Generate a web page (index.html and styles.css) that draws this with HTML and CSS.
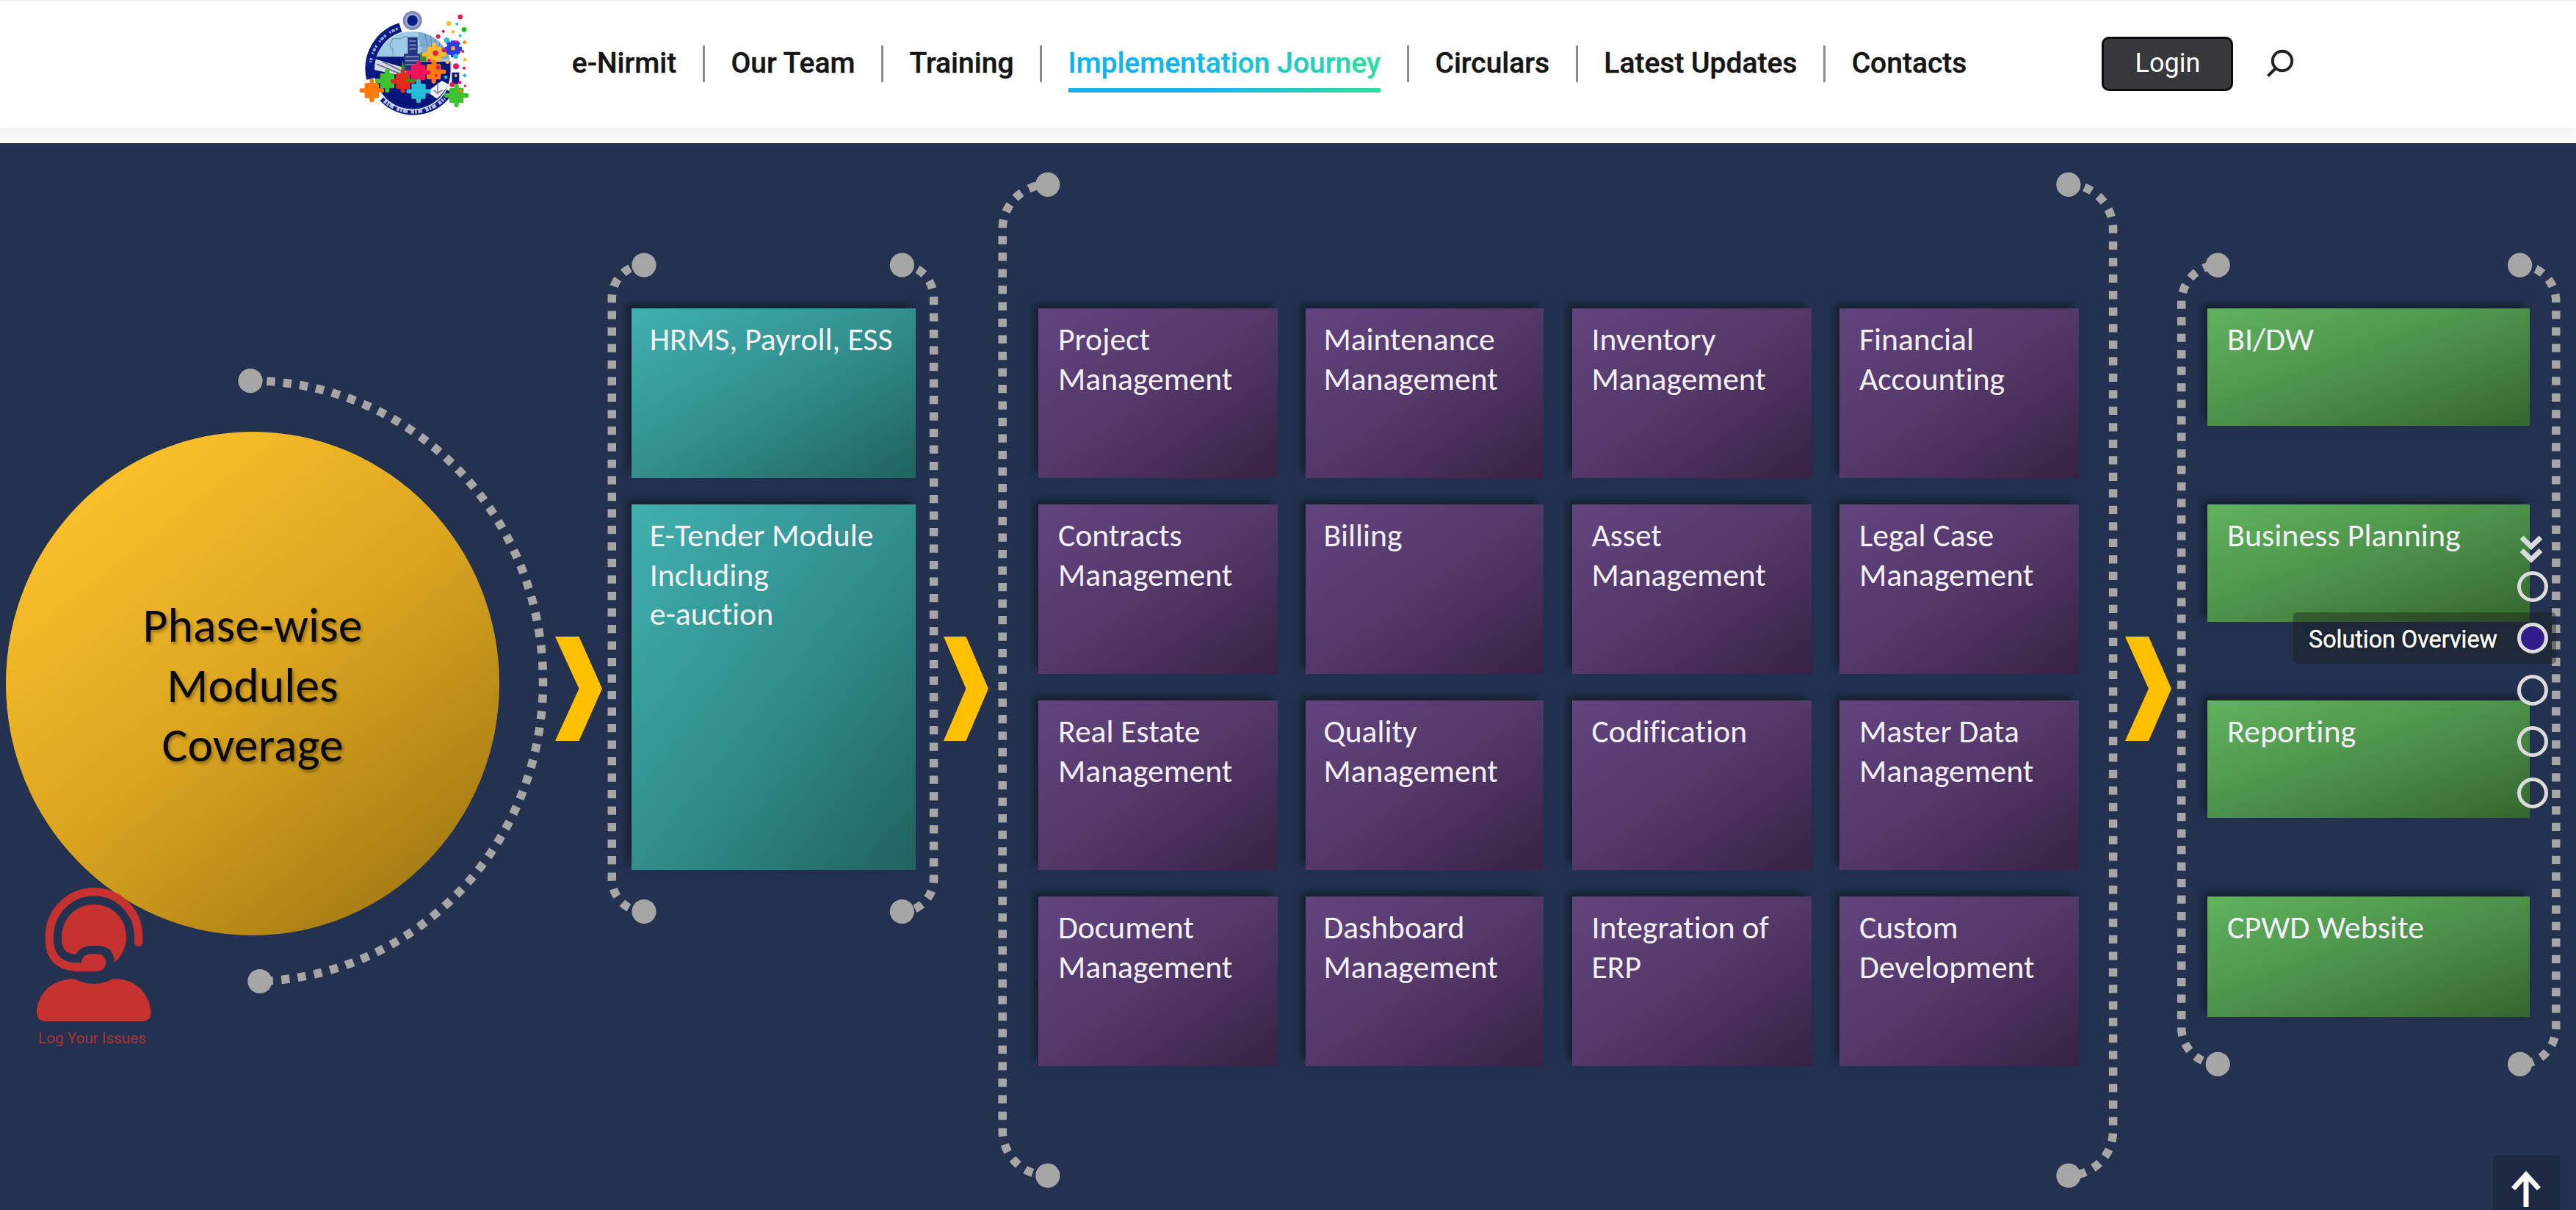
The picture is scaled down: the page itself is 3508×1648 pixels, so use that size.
FILE: index.html
```
<!DOCTYPE html>
<html lang="en">
<head>
<meta charset="utf-8">
<title>e-Nirmit | Implementation Journey</title>
<link rel="stylesheet" href="styles.css">
</head>
<body>
<header class="header">
  <a class="logo" href="#" aria-label="e-Nirmit home">
    <svg width="200" height="174" viewBox="0 0 600 522">
      <defs>
        <clipPath id="disc"><circle cx="276" cy="286" r="158"/></clipPath>
        <g id="piece">
          <rect x="-29" y="-31" width="58" height="62" rx="5"/>
          <rect x="-9" y="-48" width="18" height="96" rx="7"/>
          <rect x="-50" y="-9" width="100" height="18" rx="7"/>
        </g>
      </defs>
      <circle cx="276" cy="286" r="158" fill="#9ccbe6"/>
      <g clip-path="url(#disc)">
        <path d="M300 90h140v150H330Q290 160 300 90z" fill="#7fadcf"/>
        <path d="M320 100l20 110M345 100l10 110M370 105v110M395 115l-15 100M415 140l-30 80" stroke="#5e86ad" stroke-width="3"/>
        <path d="M195 230v-30q-22-8 0-42h34q18-18 28 0M300 190q30-20 40 8" fill="none" stroke="#7a9bb4" stroke-width="4"/>
        <path d="M100 232h160v20h180v200H100z" fill="#08157c"/>
        <path d="M120 240l150 46-10 30-140-30z" fill="#d5d9e4"/>
        <path d="M130 262l120 50M150 250l110 55" stroke="#6d7486" stroke-width="6"/>
        <path d="M240 220h16v-68h40v68h12v70h-68z" fill="#26347f"/>
        <path d="M262 168h28M262 184h28M262 200h28M246 232h56M246 248h56M246 264h56" stroke="#7f95bd" stroke-width="5"/>
        <path d="M228 290l6-46 14 46zM308 214q20-10 24 36h-24z" fill="#3d8c12"/>
        <path d="M335 375l60-45 30 15-45 62z" fill="#eef0f6"/>
        <path d="M378 340v46M362 368q16 20 34 0" stroke="#7882a8" stroke-width="5" fill="none"/>
        <path d="M160 370q110 90 250 20v70H160z" fill="#071273"/>
      </g>
      <path d="M226 112A177 177 0 0 0 106 322" fill="none" stroke="#071b83" stroke-width="38"/>
      <path d="M155 400A172 172 0 0 0 425 372" fill="none" stroke="#071b83" stroke-width="34"/>
      <path d="M215 117A170 170 0 0 0 104 255" fill="none" stroke="#9aa3cf" stroke-width="11" stroke-dasharray="9 4 14 5 6 18"/>
      <path d="M160 412A178 178 0 0 0 406 402" fill="none" stroke="#b4bbe0" stroke-width="15" stroke-dasharray="12 4 8 4 18 14"/>
      <path d="M146 382A158 158 0 0 0 433 290V250" fill="none" stroke="#dfe4f4" stroke-width="5"/>
      <path d="M436 296h30v46h-30z" fill="#071b83"/>
      <circle cx="275" cy="84" r="39" fill="#7f89b5"/>
      <circle cx="275" cy="84" r="27" fill="none" stroke="#aab2d2" stroke-width="5"/>
      <circle cx="275" cy="84" r="21" fill="#0a1a85"/>
      <g>
        <use href="#piece" x="364" y="222" fill="#f9b92c"/>
        <use href="#piece" x="362" y="293" fill="#ff7a08"/>
        <use href="#piece" x="172" y="330" fill="#3ec22f"/>
        <use href="#piece" x="236" y="332" fill="#e42a1c"/>
        <use href="#piece" x="299" y="296" fill="#ee1459"/>
        <use href="#piece" x="300" y="373" fill="#27bdd6"/>
        <use href="#piece" x="109" y="370" fill="#ff7a08"/>
        <use href="#piece" x="455" y="390" fill="#3ec22f"/>
      </g>
      <g fill="#2c3be6">
        <circle cx="441" cy="200" r="28"/>
        <path d="M432 166h18v68h-18zM407 191h70v18h-70zM412 178l12-12 48 48-12 12zM460 166l12 12-48 48-12-12z"/>
      </g>
      <path d="M250 324h40v11h-40z" fill="#3d8c12"/>
      <circle cx="441" cy="197" r="9" fill="#f5a623"/>
      <g fill="#ee1459"><circle cx="470" cy="69" r="10"/><circle cx="380" cy="149" r="9"/><circle cx="401" cy="128" r="6"/><circle cx="369" cy="217" r="11"/><circle cx="404" cy="205" r="9"/><circle cx="453" cy="271" r="12"/><circle cx="486" cy="278" r="6"/><circle cx="437" cy="346" r="10"/><circle cx="468" cy="337" r="7"/><circle cx="490" cy="351" r="5"/><circle cx="380" cy="276" r="9"/><circle cx="343" cy="247" r="7"/><circle cx="481" cy="210" r="6"/><circle cx="453" cy="171" r="6"/><circle cx="372" cy="308" r="6"/></g>
      <g fill="#f9b92c"><circle cx="423" cy="96" r="10"/><circle cx="441" cy="130" r="7"/><circle cx="489" cy="244" r="7"/><circle cx="418" cy="253" r="8"/><circle cx="452" cy="309" r="6"/></g>
      <g fill="#27bdd6"><circle cx="457" cy="98" r="6"/><circle cx="470" cy="146" r="6"/><circle cx="415" cy="164" r="11"/><circle cx="452" cy="230" r="10"/><circle cx="489" cy="308" r="7"/><circle cx="411" cy="316" r="7"/></g>
      <circle cx="486" cy="121" r="10" fill="#16b81c"/>
      <circle cx="488" cy="173" r="7" fill="#ff7a08"/><circle cx="470" cy="371" r="7" fill="#ff7a08"/>
    </svg>
  </a>
  <nav class="nav">
    <a class="nav-item" href="#">e-Nirmit</a>
    <a class="nav-item" href="#">Our Team</a>
    <a class="nav-item" href="#">Training</a>
    <a class="nav-item" href="#"><span class="current">Implementation Journey</span></a>
    <a class="nav-item" href="#">Circulars</a>
    <a class="nav-item" href="#">Latest Updates</a>
    <a class="nav-item" href="#">Contacts</a>
  </nav>
  <button class="login">Login</button>
  <svg class="search" width="42" height="42" viewBox="0 0 42 42"><circle cx="24" cy="17" r="13.2"/><path d="M15 27L4.500 37.500"/></svg>
</header>

<main class="stage">
  <svg class="frames" width="3508" height="1453" viewBox="0 195 3508 1453">
    <g class="dotted">
      <path d="M341 518.600A398.500 409 0 0 1 739.500 929A398.500 407.500 0 0 1 353.800 1336.500" stroke-dashoffset="-22.400"/>
      <path d="M877 361A43.700 45 0 0 0 833.300 406V1197A43.700 44.500 0 0 0 877 1241.500" stroke-dashoffset="2.900"/>
      <path d="M1228.400 361A43.200 45 0 0 1 1271.600 406V1197A43.200 44.500 0 0 1 1228.400 1241.500" stroke-dashoffset="0.400"/>
      <path d="M1426.800 251.300A61.600 61 0 0 0 1365.200 312.300V1540A61.600 61 0 0 0 1426.800 1601" stroke-dashoffset="7.100"/>
      <path d="M2816.900 251.300A60.700 61 0 0 1 2877.600 312.300V1540A60.700 61 0 0 1 2816.900 1601" stroke-dashoffset="0.600"/>
      <path d="M3020.200 361.200A49.500 50 0 0 0 2970.700 411.200V1399.300A49.500 50 0 0 0 3020.200 1449.300" stroke-dashoffset="13.600"/>
      <path d="M3431.600 361.200A49.200 50 0 0 1 3480.800 411.200V1399.300A49.200 50 0 0 1 3431.600 1449.300" stroke-dashoffset="0.200"/>
    </g>
    <g class="ends">
      <circle cx="341" cy="518.600" r="16.600"/><circle cx="353.800" cy="1336.500" r="16.600"/>
      <circle cx="877" cy="361" r="16.600"/><circle cx="1228.400" cy="361" r="16.600"/>
      <circle cx="877" cy="1241.500" r="16.600"/><circle cx="1228.400" cy="1241.500" r="16.600"/>
      <circle cx="1426.800" cy="251.300" r="16.600"/><circle cx="2816.900" cy="251.300" r="16.600"/>
      <circle cx="1426.800" cy="1601.200" r="16.600"/><circle cx="2816.900" cy="1601.200" r="16.600"/>
      <circle cx="3020.200" cy="361.200" r="16.600"/><circle cx="3431.600" cy="361.200" r="16.600"/>
      <circle cx="3020.200" cy="1449.300" r="16.600"/><circle cx="3431.600" cy="1449.300" r="16.600"/>
    </g>
  </svg>

  <div class="flow">
    <h1 class="coverage">Phase-wise<br>Modules<br>Coverage</h1>
    <svg class="arrow arrow-first" width="64" height="142" viewBox="0 0 64 142"><path d="M0 0H32.500L64 71L32.500 142H0L32.500 71z"/></svg>
    <section class="group teal">
      <div class="card">HRMS, Payroll, ESS</div>
      <div class="card">E-Tender Module<br>Including<br>e-auction</div>
    </section>
    <svg class="arrow arrow-second" width="61" height="142" viewBox="0 0 61 142"><path d="M0 0H30.500L61 71L30.500 142H0L30.500 71z"/></svg>
    <section class="group purple">
      <div class="card">Project<br>Management</div>
      <div class="card card-tight">Maintenance<br>Management</div>
      <div class="card">Inventory<br>Management</div>
      <div class="card">Financial<br>Accounting</div>
      <div class="card">Contracts<br>Management</div>
      <div class="card card-tight">Billing</div>
      <div class="card">Asset<br>Management</div>
      <div class="card">Legal Case<br>Management</div>
      <div class="card">Real Estate<br>Management</div>
      <div class="card card-tight">Quality<br>Management</div>
      <div class="card">Codification</div>
      <div class="card">Master Data<br>Management</div>
      <div class="card">Document<br>Management</div>
      <div class="card card-tight">Dashboard<br>Management</div>
      <div class="card">Integration of<br>ERP</div>
      <div class="card">Custom<br>Development</div>
    </section>
    <svg class="arrow arrow-third" width="63" height="142" viewBox="0 0 63 142"><path d="M0 0H32L63 71L32 142H0L32 71z"/></svg>
    <section class="group green">
      <div class="card">BI/DW</div>
      <div class="card">Business Planning</div>
      <div class="card">Reporting</div>
      <div class="card">CPWD Website</div>
    </section>
  </div>
</main>

<a class="support" href="#">
  <svg width="200" height="206" viewBox="0 0 600 618">
    <path class="band" d="M476 280V257A182 183 0 0 0 112 257V278Q118 372 213 381H300"/>
    <path d="M243 364A36 36 0 0 1 279 328H308A35 35 0 0 1 308 398H215V364z"/>
    <path d="M162 257A132 132 0 0 1 426 257Q426 318 378 363Q375 295 308 295H280Q242 295 221 327Q213 330 206 328Q162 322 162 268z"/>
    <path d="M60 570C60 500 115 430 213 430Q250 450 294 450Q336 450 370 430C470 424 526 500 526 570Q524 604 490 603H95Q62 602 60 570z"/>
  </svg>
  <span>Log Your Issues</span>
</a>

<aside class="section-nav">
  <svg width="40" height="44" viewBox="0 0 40 44"><path d="M6 7L19 19.500L32 7M6 24.500L19 37L32 24.500"/></svg>
  <i class="dot"></i>
  <i class="dot dot-active"></i>
  <i class="dot"></i>
  <i class="dot"></i>
  <i class="dot"></i>
  <span class="tooltip">Solution Overview</span>
</aside>

<a class="to-top" href="#" aria-label="Back to top">
  <svg width="91" height="74" viewBox="0 0 91 74"><path d="M45 70V27M27.500 45L45 26L62.500 45"/></svg>
</a>
</body>
</html>
```
FILE: styles.css
```
* { box-sizing: border-box; }

body {
  margin: 0;
  height: 1648px;
  overflow: hidden;
  position: relative;
  background: #fafafa;
  font-family: Roboto, sans-serif;
}

a { color: inherit; text-decoration: none; }

/* Header */
.header {
  display: flex;
  align-items: flex-start;
  height: 174px;
  padding-left: 470px;
  background: #fff;
  border-top: 1px solid #ededed;
  box-shadow: 0 6px 16px 4px rgba(0, 0, 0, .035);
}

.logo { display: block; width: 200px; height: 173px; }
.logo svg { display: block; margin-top: -1px; }

.nav {
  display: flex;
  margin: 61px 0 0 73.200px;
  font-size: 39px;
  font-weight: 500;
  line-height: 49px;
  color: #161616;
  -webkit-text-stroke: .4px currentColor;
}

.nav-item {
  display: block;
  height: 50px;
  padding: 0 35.600px;
  white-space: nowrap;
  border-right: 3px solid #8a8a8a;
}
.nav-item:last-child { border-right: 0; }

.current {
  position: relative;
  display: block;
  color: transparent;
  background: linear-gradient(90deg, #12b2f5 35%, #2ddf9b);
  -webkit-background-clip: text;
  background-clip: text;
}
.current::after {
  content: "";
  position: absolute;
  left: 0;
  right: 0;
  top: 57.500px;
  height: 6px;
  background: linear-gradient(90deg, #12b2f5 35%, #2ddf9b);
}

.login {
  width: 179px;
  height: 74px;
  margin: 49px 0 0 148.500px;
  padding: 0 0 2px;
  border: 3px solid #0c0c0d;
  border-radius: 10px;
  background: #37383c;
  color: #fff;
  font: 400 36px/1 Roboto, sans-serif;
}

.search { margin: 65px 0 0 43px; fill: none; stroke: #222; stroke-width: 4; }

/* Journey diagram */
.stage {
  position: relative;
  height: 1453px;
  margin-top: 21px;
  background: #243250;
}

.frames { position: absolute; left: 0; top: 0; }
.dotted path { fill: none; stroke: #a6a6a6; stroke-width: 11.500; stroke-dasharray: 11.250 11.250; }
.ends { fill: #a6a6a6; }

.flow {
  position: relative;
  display: flex;
  align-items: flex-start;
  padding: 225px 0 0 8px;
  font-family: Carlito, Calibri, "Open Sans", sans-serif;
  font-variant-ligatures: none;
}

.coverage {
  width: 672px;
  height: 686px;
  margin: 168px 0 0;
  padding-top: 223px;
  border-radius: 50%;
  background: linear-gradient(142deg, #ffc42c 8%, #dba520 50%, #a07812 92%);
  color: #0a0904;
  font-size: 65.700px;
  font-weight: 400;
  line-height: 81.500px;
  text-align: center;
  text-shadow: 2px 3px 4px rgba(0, 0, 0, .35);
}

.arrow { flex: none; margin-top: 446.500px; fill: #ffc000; }
.arrow-first { margin-left: 76.300px; }
.arrow-second { margin-left: 38px; }
.arrow-third { margin-left: 63px; }

.group { display: grid; flex: none; }

.card {
  padding: 16.200px 0 0 27px;
  color: #f3eff6;
  font-size: 44px;
  line-height: 53.400px;
  white-space: nowrap;
  box-shadow: -7px -7px 10px -1px rgba(10, 14, 20, .55);
}

.teal { width: 386.500px; margin-left: 40.200px; grid-template-rows: 231px 498px; row-gap: 36px; }
.teal .card { padding-left: 24.200px; font-size: 43.800px; background: linear-gradient(to bottom right, #40b1ae, #318f8d 50%, #20625e); }

.purple {
  margin-left: 68px;
  grid-template-columns: 326px 323.800px 326px 326px;
  grid-template-rows: repeat(4, 231px);
  gap: 36.100px 38.400px;
}
.purple .card { font-size: 43.600px; background: linear-gradient(to bottom right, #62447e, #533868 50%, #362344); }
.purple .card-tight { padding-left: 24px; }

.green { width: 439.500px; margin-left: 49px; grid-template-rows: 160px 160px 160px 164px; row-gap: 107px; }
.green .card { background: linear-gradient(to bottom right, #60b35d, #4c914a 50%, #346630); }

/* Support shortcut */
.support {
  position: absolute;
  left: 30px;
  top: 1190px;
  width: 200px;
  color: #c53230;
}
.support svg { display: block; fill: currentColor; }
.support .band { fill: none; stroke: currentColor; stroke-width: 34; stroke-linecap: round; }
.support span {
  display: block;
  padding-left: 22px;
  font-size: 20.700px;
  line-height: 36px;
  color: #ad3239;
}

/* Section navigation */
.section-nav {
  position: absolute;
  left: 3427.500px;
  top: 725px;
  display: flex;
  flex-direction: column;
  width: 43px;
}
.section-nav svg { display: block; margin-bottom: 9px; fill: none; stroke: #dadada; stroke-width: 7; }
.dot {
  z-index: 1;
  width: 42px;
  height: 42px;
  margin-bottom: 28.300px;
  border: 5.500px solid #dcdcdc;
  border-radius: 50%;
}
.dot-active { background: #321d8c; }
.tooltip {
  position: absolute;
  right: -10px;
  top: 109px;
  width: 358px;
  height: 70px;
  padding-left: 21.500px;
  border-radius: 5px;
  background: rgba(27, 27, 20, .4);
  color: #fff;
  font-size: 32.300px;
  line-height: 75px;
  white-space: nowrap;
  text-shadow: 0 0 3px #000;
  -webkit-text-stroke: .5px #fff;
}

/* Back to top */
.to-top {
  position: absolute;
  left: 3395px;
  top: 1574px;
  width: 91px;
  height: 74px;
  background: #1e2943;
}
.to-top svg { display: block; fill: none; stroke: #fff; stroke-width: 7; }
```
